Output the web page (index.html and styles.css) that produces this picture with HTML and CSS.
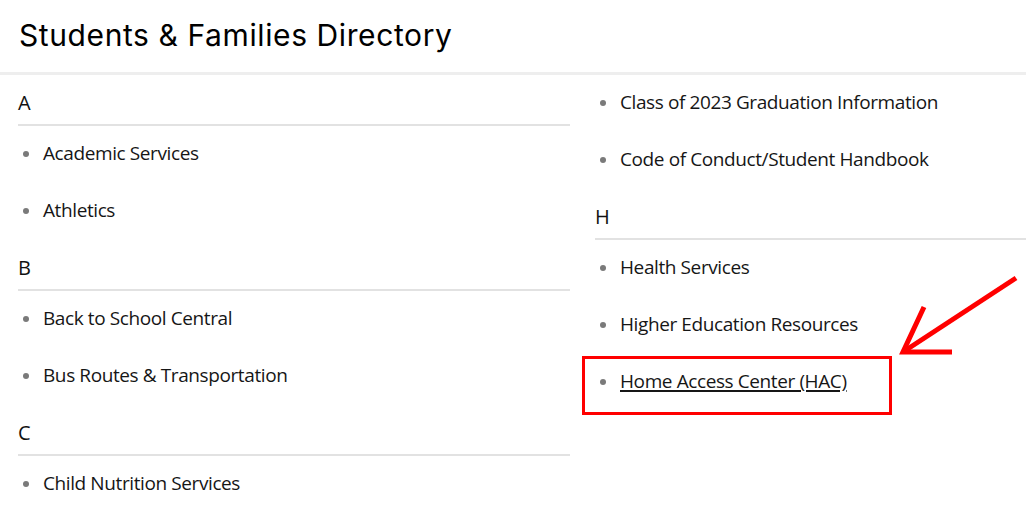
FILE: index.html
```html
<!DOCTYPE html>
<html lang="en">
<head>
<meta charset="utf-8">
<title>Students &amp; Families Directory</title>
<link rel="stylesheet" href="styles.css">
</head>
<body>
<div class="page">
  <header class="page-header">
    <h1 class="page-title">Students &amp; Families Directory</h1>
  </header>
  <main class="directory">
    <div class="dir-col">
      <section class="group">
        <h2 class="letter">A</h2>
        <ul class="items">
          <li class="item"><a class="item-link" href="#">Academic Services</a></li>
          <li class="item"><a class="item-link" href="#">Athletics</a></li>
        </ul>
      </section>
      <section class="group">
        <h2 class="letter">B</h2>
        <ul class="items">
          <li class="item"><a class="item-link" href="#">Back to School Central</a></li>
          <li class="item"><a class="item-link" href="#">Bus Routes &amp; Transportation</a></li>
        </ul>
      </section>
      <section class="group">
        <h2 class="letter">C</h2>
        <ul class="items">
          <li class="item"><a class="item-link" href="#">Child Nutrition Services</a></li>
        </ul>
      </section>
    </div>
    <div class="dir-col">
      <section class="group">
        <ul class="items">
          <li class="item"><a class="item-link" href="#">Class of 2023 Graduation Information</a></li>
          <li class="item"><a class="item-link" href="#">Code of Conduct/Student Handbook</a></li>
        </ul>
      </section>
      <section class="group">
        <h2 class="letter">H</h2>
        <ul class="items">
          <li class="item"><a class="item-link" href="#">Health Services</a></li>
          <li class="item"><a class="item-link" href="#">Higher Education Resources</a></li>
          <li class="item"><a class="item-link is-hover" href="#">Home Access Center (HAC)</a></li>
        </ul>
      </section>
    </div>
  </main>
  <svg class="annotation" width="1026" height="518" viewBox="0 0 1026 518" aria-hidden="true">
    <rect x="583.5" y="357.5" width="307" height="56" fill="none" stroke="#ff0000" stroke-width="3"/>
    <path d="M1016 278 L903 352" fill="none" stroke="#ff0000" stroke-width="5"/>
    <path d="M924 307 L903 352 L952 352" fill="none" stroke="#ff0000" stroke-width="5" stroke-linejoin="miter"/>
  </svg>
</div>
</body>
</html>
```

FILE: styles.css
```css
* { box-sizing: border-box; }

html, body {
  margin: 0;
  padding: 0;
  background: #ffffff;
}

body {
  font-family: "Open Sans", "Noto Sans", "DejaVu Sans", sans-serif;
  color: #161616;
  overflow: hidden;
}

.page {
  position: relative;
  width: 1026px;
  height: 518px;
  overflow: hidden;
}

.page-header {
  height: 75px;
  display: flex;
  align-items: center;
  padding: 0 19px 2px;
  border-bottom: 3px solid #eeeeee;
}

.page-title {
  margin: 0;
  font-family: "Inter", "DejaVu Sans", sans-serif;
  font-weight: 400;
  font-size: 30px;
  color: #000000;
  letter-spacing: 0.6px;
}

.directory {
  display: grid;
  grid-template-columns: 552px 552px;
  column-gap: 25px;
  padding-left: 18px;
}

.group { margin: 0; }

.letter {
  margin: 0;
  padding: 14px 0 8px;
  font-size: 20px;
  line-height: 27px;
  font-weight: 400;
  color: #111111;
  border-bottom: 2px solid #e2e2e2;
}

.items {
  list-style: none;
  margin: 0;
  padding: 0;
}

.item {
  display: flex;
  align-items: center;
  padding: 14px 0 16px;
  font-size: 19px;
  line-height: 27px;
  letter-spacing: -0.4px;
}

.item::before {
  content: "";
  flex: none;
  width: 6px;
  height: 6px;
  border-radius: 50%;
  background: #7a7a7a;
  margin: 0 14px 0 5px;
}

.item-link {
  color: #161616;
  text-decoration: none;
}

.item-link.is-hover {
  text-decoration: underline;
  text-decoration-thickness: 2px;
  text-underline-offset: 2px;
}

.annotation {
  position: absolute;
  top: 0;
  left: 0;
  pointer-events: none;
}
```
